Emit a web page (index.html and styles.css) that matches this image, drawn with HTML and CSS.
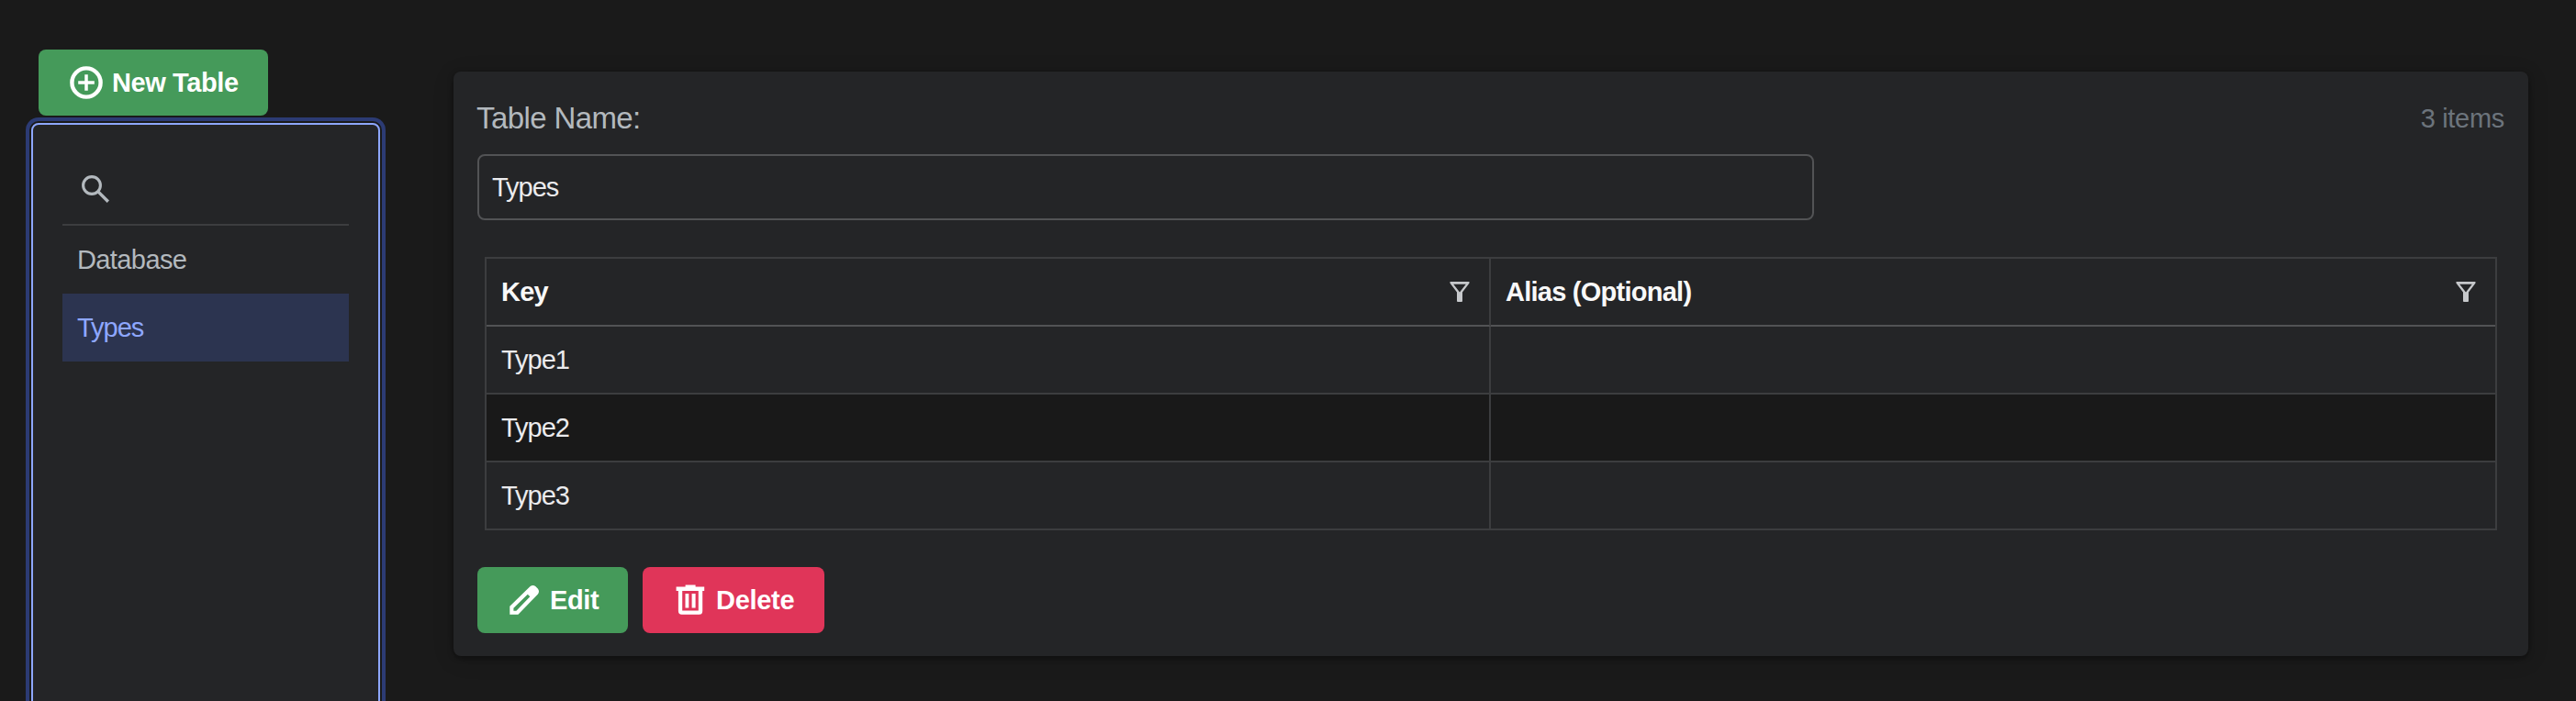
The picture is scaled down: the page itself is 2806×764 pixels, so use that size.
FILE: index.html
```html
<!DOCTYPE html>
<html lang="en">
<head>
<meta charset="utf-8">
<title>Tables</title>
<link rel="stylesheet" href="styles.css">
</head>
<body>
<div class="page">
  <aside class="sidebar">
    <button class="btn btn-success">
      <svg class="icon" viewBox="0 0 36 36"><circle cx="18" cy="18" r="15.6" fill="none" stroke="currentColor" stroke-width="4.4"/><path d="M18 9.2v17.6M9.2 18h17.6" fill="none" stroke="currentColor" stroke-width="3.5"/></svg>
      <span>New Table</span>
    </button>
    <div class="list">
      <div class="search">
        <svg class="search-icon" viewBox="0 0 30 30"><circle cx="11" cy="11" r="9.4" fill="none" stroke="currentColor" stroke-width="3.1"/><path d="M17.4 17.4L28.8 28.8" fill="none" stroke="currentColor" stroke-width="3.4"/></svg>
      </div>
      <div class="list-item">Database</div>
      <div class="list-item active">Types</div>
    </div>
  </aside>
  <main class="card">
    <header class="card-head">
      <label class="name-label">Table Name:</label>
      <span class="count">3 items</span>
    </header>
    <div class="name-input">Types</div>
    <div class="grid">
      <div class="row head">
        <div class="cell"><span>Key</span><svg class="filter" viewBox="0 0 22 22"><path fill="currentColor" fill-rule="evenodd" d="M.8 0H21.2Q22 .8 21.4 1.8L14 11.6V21.2L13.4 22H8.6L8 21.2V11.6L.6 1.8Q0 .8 .8 0ZM4.2 2.7H17.8L11 11.4Z"/></svg></div>
        <div class="cell"><span>Alias (Optional)</span><svg class="filter" viewBox="0 0 22 22"><path fill="currentColor" fill-rule="evenodd" d="M.8 0H21.2Q22 .8 21.4 1.8L14 11.6V21.2L13.4 22H8.6L8 21.2V11.6L.6 1.8Q0 .8 .8 0ZM4.2 2.7H17.8L11 11.4Z"/></svg></div>
      </div>
      <div class="row"><div class="cell">Type1</div><div class="cell"></div></div>
      <div class="row alt"><div class="cell">Type2</div><div class="cell"></div></div>
      <div class="row"><div class="cell">Type3</div><div class="cell"></div></div>
    </div>
    <div class="actions">
      <button class="btn btn-success">
        <svg class="icon" viewBox="0 0 36 36"><path fill="currentColor" fill-rule="evenodd" d="M2.3 33.7V24.8L24.6 3Q27.5 1 30.3 3L33 5.8Q35 8.6 33 11.4L11.4 33.7ZM6.4 29.7H9.4L24.3 14.2L21.8 11.7L6.4 26.8Z"/></svg>
        <span>Edit</span>
      </button>
      <button class="btn btn-danger">
        <svg class="icon" viewBox="0 0 36 36"><path fill="currentColor" fill-rule="evenodd" d="M3.6 3.5H13.6V1.5H24.6V3.5H34.2V8H32.2V30Q32.2 33.7 28.6 33.7H9.6Q5.9 33.7 5.9 30V8H3.6ZM10.2 8V29.4H27.8V8ZM13.5 11H17.3V26.5H13.5ZM20.6 11H24.6V26.5H20.6Z"/></svg>
        <span>Delete</span>
      </button>
    </div>
  </main>
</div>
</body>
</html>
```
FILE: styles.css
```css
* { box-sizing: border-box; }
body {
  margin: 0;
  height: 764px;
  overflow: hidden;
  background: #1a1a1a;
  color: #ebebed;
  font: 29px/40px "Liberation Sans", Arial, sans-serif;
  letter-spacing: -.9px;
}
.page { display: flex; align-items: flex-start; height: 764px; overflow: hidden; }
.sidebar { width: 380px; margin: 54px 80px 0 34px; flex: none; }
.btn {
  display: inline-flex;
  align-items: center;
  gap: 10px;
  height: 72px;
  padding: 0 0 0 33px;
  border: 0;
  border-radius: 8px;
  color: #fff;
  font: bold 29px/40px "Liberation Sans", Arial, sans-serif;
  letter-spacing: -.4px;
}
.sidebar .btn { display: flex; width: 250px; margin-left: 8px; padding-left: 34px; }
.btn-success { background: #459a5a; }
.btn-danger { background: #e03559; }
.icon { width: 36px; height: 36px; flex: none; }
.list {
  height: 800px;
  margin-top: 8px;
  padding: 32px;
  background: #242527;
  border: 2px solid #8ea7ff;
  border-radius: 8px;
  box-shadow: 0 0 0 2px #1a1a1a, 0 0 0 6px #2c3b74;
}
.search {
  display: flex;
  align-items: center;
  height: 78px;
  padding-left: 21px;
  border-bottom: 2px solid #3c3d3f;
}
.search-icon { width: 30px; height: 30px; color: #b3b9be; }
.list-item { height: 74px; padding: 17px 16px; color: #b3b9be; letter-spacing: -.6px; }
.list-item.active { background: #2c3450; color: #8ea7ff; letter-spacing: -1px; }
.card {
  width: 2260px;
  height: 637px;
  margin-top: 78px;
  padding: 26px;
  flex: none;
  background: #242527;
  border-radius: 8px;
  box-shadow: 0 2px 6px rgba(0,0,0,.4), 0 4px 24px rgba(0,0,0,.12);
}
.card-head { display: flex; justify-content: space-between; height: 64px; line-height: 50px; }
.name-label { margin-left: -1px; font-size: 33px; line-height: 49px; letter-spacing: -.6px; color: #b3b9be; }
.count { letter-spacing: -.3px; color: #6c747c; }
.name-input {
  width: 1456px;
  height: 72px;
  padding: 14px;
  border: 2px solid #525355;
  border-radius: 8px;
  letter-spacing: -1px;
}
.grid { margin: 40px 8px; border: 2px solid #3c3d3f; border-bottom: 0; }
.row { display: grid; grid-template-columns: 1094px 1fr; height: 74px; letter-spacing: -1px; }
.cell {
  display: flex;
  align-items: center;
  justify-content: space-between;
  padding: 0 16px;
  border-bottom: 2px solid #3c3d3f;
}
.cell:first-child { border-right: 2px solid #3c3d3f; }
.head { color: #f8f8f8; font-weight: bold; letter-spacing: -.75px; }
.head .cell { border-bottom-color: #525355; padding-right: 21px; }
.alt { background: #191919; }
.filter { width: 22px; height: 22px; color: #c6c8cb; }
.actions { display: flex; gap: 16px; }
.actions .btn-success { width: 164px; }
.actions .btn-danger { width: 198px; padding-left: 34px; }
.btn-danger .icon { margin-left: -1px; }
.btn-danger { letter-spacing: -.3px; gap: 11px; }
```
